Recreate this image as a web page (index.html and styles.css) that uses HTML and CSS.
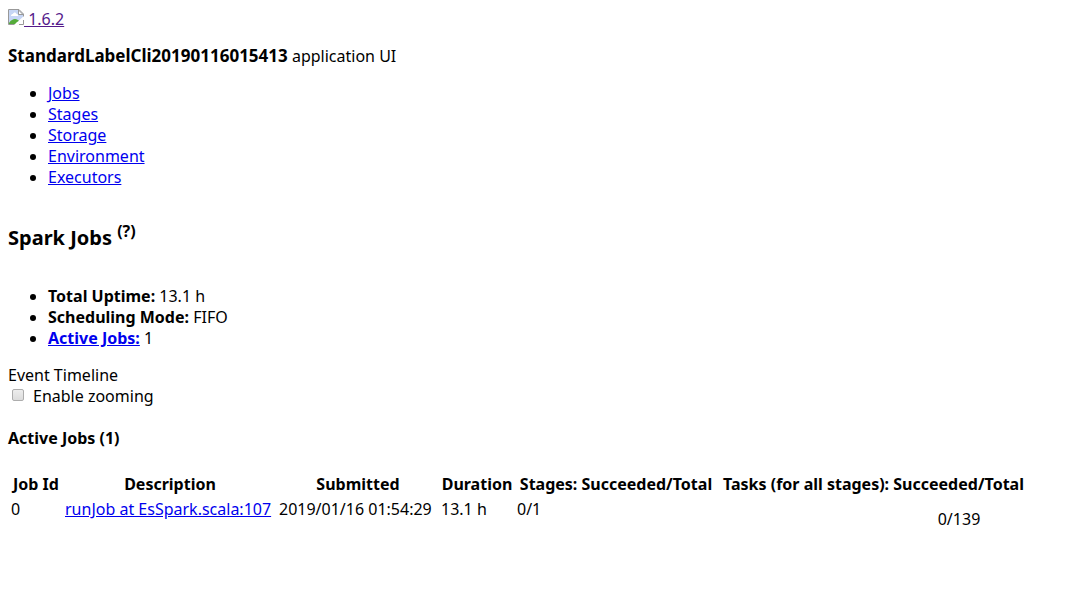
FILE: index.html
```html
<!DOCTYPE html>
<html lang="en">
<head>
<meta charset="utf-8">
<title>Spark Jobs</title>
<link rel="stylesheet" href="styles.css">
</head>
<body>
<header>
  <div class="top"><a class="brand" href="#"><svg class="broken" width="16" height="16" viewBox="0 0 16 16" aria-hidden="true"><path d="M1 1h10l4 4v3L7 15H1z" fill="#c6d6f5"/><path d="M3 7c0-1.500 1-2 2-2 .5-2 3-2 3.500 0C10 5 10.500 6 10 7z" fill="#fff"/><path d="M1 14c2-3 4-4 6-4 2 0 3 1 4 2l-3 3H1z" fill="#55ac3a"/><path d="M15.500 8V5l-4.500-4.500H.5v15H8" fill="none" stroke="#999"/><path d="M10.500 1v4.500H15z" fill="#fff" stroke="#999"/><path d="M16 7v1l-8 8H6l3-3 2-1z" fill="#fff"/><path d="M11 15.500h4.500V11" fill="none" stroke="#999"/></svg> 1.6.2</a></div>
  <p class="app"><strong>StandardLabelCli20190116015413</strong> application UI</p>
  <nav><ul class="list">
    <li><a href="#">Jobs</a></li>
    <li><a href="#">Stages</a></li>
    <li><a href="#">Storage</a></li>
    <li><a href="#">Environment</a></li>
    <li><a href="#">Executors</a></li>
  </ul></nav>
</header>
<main>
  <h3 class="title">Spark Jobs <sup>(?)</sup></h3>
  <ul class="list">
    <li><strong>Total Uptime:</strong> 13.1 h</li>
    <li><strong>Scheduling Mode:</strong> FIFO</li>
    <li><a href="#active"><strong>Active Jobs:</strong></a> 1</li>
  </ul>
  <div>Event Timeline</div>
  <div class="option"><input class="check" type="checkbox" id="zoom"><label for="zoom">Enable zooming</label></div>
  <h4 class="subtitle" id="active">Active Jobs (1)</h4>
  <table class="jobs">
    <colgroup><col class="col-id"><col class="col-description"><col class="col-submitted"><col class="col-duration"><col class="col-stages"><col class="col-tasks"></colgroup>
    <thead><tr><th>Job Id</th><th>Description</th><th>Submitted</th><th>Duration</th><th>Stages: Succeeded/Total</th><th>Tasks (for all stages): Succeeded/Total</th></tr></thead>
    <tbody><tr><td>0</td><td><a href="#">runJob at EsSpark.scala:107</a></td><td>2019/01/16 01:54:29</td><td>13.1 h</td><td>0/1</td><td class="progress">0/139</td></tr></tbody>
  </table>
</main>
</body>
</html>
```
FILE: styles.css
```css
body { margin: 8px; background: #fff; color: #000; font: 16px/21px "Noto Sans", sans-serif; }
a { color: #0000ee; }
.top { padding-top: 1px; }
.brand { color: #551a8b; }
.broken { vertical-align: baseline; }
.app { margin: 16px 0; }
.app strong { font-size: 17px; line-height: 20px; }
.list { margin: 16px 0; padding-left: 40px; }
.title { margin: 35px 0 36px; font-size: 20px; line-height: 25px; }
.title sup { font-size: 16px; line-height: 16px; }
.option { display: flex; align-items: center; gap: 9px; }
.check {
  appearance: none;
  box-sizing: border-box;
  width: 12px;
  height: 12px;
  margin: 0 0 2px 4px;
  border: 1px solid #adadad;
  border-radius: 2px;
  background: linear-gradient(#ededed, #dcdcdc);
}
.check:checked { background: #555; }
.subtitle { margin: 21px 0 22px; font-size: 16px; }
.jobs { border-spacing: 2px; }
.jobs th, .jobs td { padding: 1px; white-space: nowrap; }
.jobs td { vertical-align: top; }
.jobs .progress { padding-top: 11px; padding-left: 172px; text-align: center; }
.col-id { width: 52px; }
.col-description { width: 212px; }
.col-submitted { width: 160px; }
.col-duration { width: 74px; }
.col-stages { width: 200px; }
.col-tasks { width: 311px; }
```
